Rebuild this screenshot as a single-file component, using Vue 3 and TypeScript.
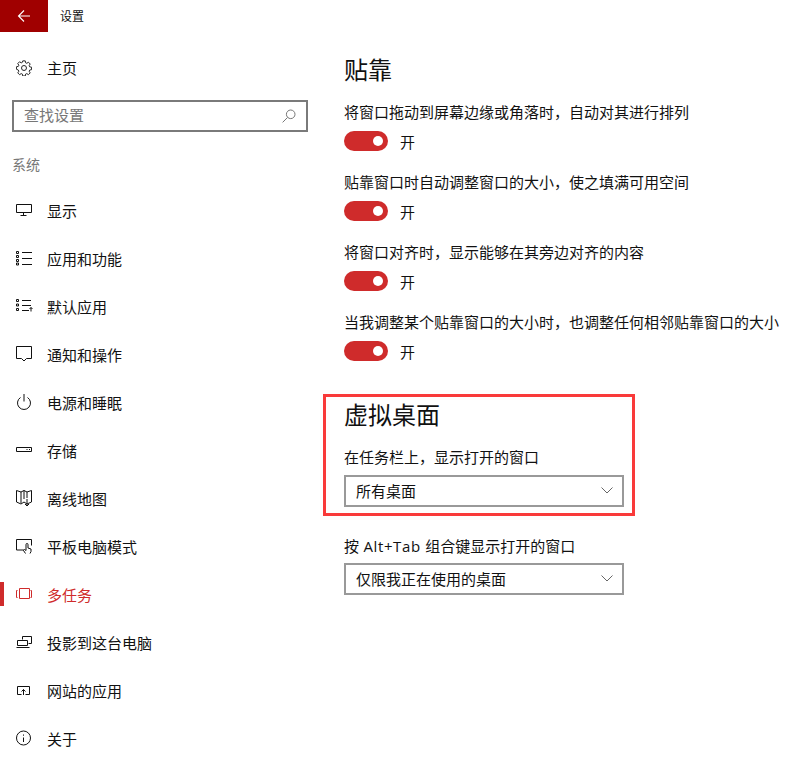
<template>
  <div class="page">
    <aside class="side">
      <div class="titlebar">
        <button class="back">
          <svg width="14" height="14" viewBox="0 0 14 14"><path d="M13 7H1.5M7 1.5 1.5 7 7 12.5" fill="none" stroke="#fff" stroke-width="1.1" /></svg>
        </button>
        <span class="app-title">设置</span>
      </div>

      <div class="home">
        <span class="icon">
          <svg width="16" height="16" viewBox="0 0 18 18" fill="none" stroke="#222" stroke-width="1.100">
            <circle cx="9" cy="9" r="2.800" />
            <path d="M7.600 1h2.800l.4 2.100 1.300.6 1.900-1.200 2 2-1.200 1.900.6 1.300 2.100.4v2.800l-2.100.4-.6 1.300 1.200 1.900-2 2-1.900-1.200-1.300.6-.4 2.100H7.600l-.4-2.100-1.300-.6-1.900 1.200-2-2 1.200-1.900-.6-1.300L.5 10.400V7.600l2.100-.4.6-1.300L2 4l2-2 1.900 1.200 1.300-.6z" />
          </svg>
        </span>
        <span class="home-label">主页</span>
      </div>

      <div class="search">
        <span class="search-label">查找设置</span>
        <svg width="14" height="14" viewBox="0 0 14 14" fill="none" stroke="#777" stroke-width="1"><circle cx="8.700" cy="5.300" r="4.300" /><path d="M5.600 8.400.6 13.400" /></svg>
      </div>

      <div class="group">系统</div>

      <nav>
        <div v-for="item in navItems" :key="item.label" class="nav-item" :class="{ active: item.active }">
          <span class="icon">
            <svg width="18" height="18" viewBox="0 0 18 18" fill="none" stroke="currentColor" stroke-width="1">
              <path :d="item.icon" />
            </svg>
          </span>
          <span class="nav-label">{{ item.label }}</span>
        </div>
      </nav>
    </aside>

    <main class="content">
      <h2 class="snap-title">贴靠</h2>
      <div v-for="opt in snapOptions" :key="opt" class="option">
        <div class="opt-label">{{ opt }}</div>
        <div class="toggle-row">
          <span class="toggle"><span class="knob"></span></span>
          <span>开</span>
        </div>
      </div>

      <section class="desktops">
        <div class="highlight"></div>
        <h2>虚拟桌面</h2>
        <div class="field-label">在任务栏上，显示打开的窗口</div>
        <div class="select first">
          <span>所有桌面</span>
          <svg width="12" height="7" viewBox="0 0 12 7" fill="none" stroke="#666" stroke-width="1"><path d="M.5.5 6 6 11.500.5" /></svg>
        </div>
        <div class="field-label second">按<span class="latin"> Alt+Tab </span>组合键显示打开的窗口</div>
        <div class="select">
          <span>仅限我正在使用的桌面</span>
          <svg width="12" height="7" viewBox="0 0 12 7" fill="none" stroke="#666" stroke-width="1"><path d="M.5.5 6 6 11.500.5" /></svg>
        </div>
      </section>
    </main>
  </div>
</template>

<script setup lang="ts">
interface NavItem {
  label: string;
  icon: string;
  active?: boolean;
}

const navItems: NavItem[] = [
  { label: "显示", icon: "M.5 3.500h15v8H.5zM7.500 11.500v2.500M4.500 14.500h6" },
  { label: "应用和功能", icon: "M.5 2.500h2v2h-2zM.5 6.500h2v2h-2zM.5 10.500h2v2h-2zM.5 14h2v2h-2zM6 3.500h10M6 9.500h10M6 15.500h10" },
  { label: "默认应用", icon: "M.5 2.500h2v2h-2zM.5 7h2v2h-2zM.5 11.500h2v2h-2zM6 3.500h9M6 8.500h9M6 13.500h7M15 14.500v-4M13.500 12 15 10.500l1.500 1.500" },
  { label: "通知和操作", icon: "M.5 1.500h15v12h-5L8 16l-2.500-2.500h-5z" },
  { label: "电源和睡眠", icon: "M8 1v7.500M4.500 4.500a6.500 6.500 0 1 0 7 0" },
  { label: "存储", icon: "M.5 6.500h15v4H.5zM10.500 8.500h1M13 8.500h1" },
  { label: "离线地图", icon: "M5 3 .5 1.500v11.500L5 15l3-2 3 2 4.500-2V1.500L11 3 8 1.500zM5 3v11M11 3v6M8 1.500V10M11 10v7M9 15l2 2 2-2" },
  { label: "平板电脑模式", icon: "M8 13H.5V2.500h15v6M9.500 16.500 7.500 13.500l1-1 1.500 1V7.500a1 1 0 0 1 2 0V11l3 1v2.500l-1 2" },
  { label: "多任务", icon: "M3.500 3.500h10v10h-10zM1.500 5.500h-1v7h1M14.500 5.500h1v7h-1", active: true },
  { label: "投影到这台电脑", icon: "M6.500 6.500v-3h9v7h-3M1.500 7.500h10v5h-10zM.5 14.500h13" },
  { label: "网站的应用", icon: "M5.500 13.500h-4v-8h12v8h-4M7.500 14V8.500M5.500 10.500l2-2 2 2" },
  { label: "关于", icon: "M7.500 2a7 7 0 1 0 0 14 7 7 0 0 0 0-14zM7.500 8.500v4.500M7.500 5.500v1.200" },
];

const snapOptions: string[] = [
  "将窗口拖动到屏幕边缘或角落时，自动对其进行排列",
  "贴靠窗口时自动调整窗口的大小，使之填满可用空间",
  "将窗口对齐时，显示能够在其旁边对齐的内容",
  "当我调整某个贴靠窗口的大小时，也调整任何相邻贴靠窗口的大小",
];
</script>

<style>
html,
body {
  margin: 0;
  background: #fff;
}
</style>

<style scoped>
.page {
  display: flex;
  width: 792px;
  height: 762px;
  overflow: hidden;
  font-family: "Noto Sans CJK SC", "Noto Sans", sans-serif;
  font-size: 15px;
  color: #111;
  background: #fff;
}

.side {
  width: 344px;
  flex-shrink: 0;
}

.titlebar {
  display: flex;
  align-items: center;
  height: 32px;
}

.back {
  display: flex;
  align-items: center;
  justify-content: center;
  width: 48px;
  height: 32px;
  padding: 0;
  border: 0;
  background: #a00000;
}

.app-title {
  margin-left: 12px;
  padding-bottom: 2px;
  font-size: 12px;
}

.icon {
  display: flex;
  align-items: center;
  width: 31px;
}

.home-label {
  padding-bottom: 1px;
}

.search-label {
  padding-bottom: 3px;
}

.nav-label {
  padding-top: 1px;
}

.home {
  display: flex;
  align-items: center;
  height: 48px;
  margin-top: 12px;
  padding-left: 16px;
}

.search {
  display: flex;
  align-items: center;
  justify-content: space-between;
  box-sizing: border-box;
  width: 296px;
  height: 32px;
  margin: 8px 0 0 12px;
  padding: 0 10px;
  border: 2px solid #7a7a7a;
  color: #777;
}

.group {
  height: 20px;
  margin-top: 22px;
  padding-left: 12px;
  line-height: 20px;
  font-size: 14px;
  color: #777;
}

nav {
  margin-top: 12px;
}

.nav-item {
  display: flex;
  align-items: center;
  height: 48px;
  padding-left: 16px;
  position: relative;
}

.nav-item.active {
  color: #cf2b2b;
}

.nav-item.active::before {
  content: "";
  position: absolute;
  left: 0;
  top: 12px;
  width: 4px;
  height: 24px;
  background: #cf2b2b;
}

.content {
  flex: 1;
  min-width: 0;
}

h2 {
  margin: 0;
  font-size: 24px;
  font-weight: 400;
  line-height: 34px;
}

.snap-title {
  margin-top: 52px;
  margin-bottom: 10px;
}

.option {
  height: 70px;
}

.opt-label {
  height: 32px;
  line-height: 32px;
  white-space: nowrap;
}

.toggle-row {
  display: flex;
  align-items: center;
  gap: 12px;
  height: 26px;
}

.toggle {
  display: flex;
  align-items: center;
  justify-content: flex-end;
  box-sizing: border-box;
  width: 44px;
  height: 20px;
  padding-right: 5px;
  border-radius: 10px;
  background: #cf2b2b;
}

.knob {
  width: 10px;
  height: 10px;
  border-radius: 50%;
  background: #fff;
}

.desktops {
  position: relative;
  margin-top: 21px;
}

.highlight {
  position: absolute;
  left: -21px;
  top: -3px;
  box-sizing: border-box;
  width: 312px;
  height: 122px;
  border: 3px solid #f93a3a;
}

.field-label {
  height: 22px;
  margin-top: 15px;
  line-height: 22px;
  white-space: nowrap;
}

.field-label.second {
  margin-top: 28px;
}

.latin {
  font-family: "Open Sans", sans-serif;
  letter-spacing: 0.6px;
}

.select {
  display: flex;
  align-items: center;
  justify-content: space-between;
  box-sizing: border-box;
  width: 280px;
  height: 32px;
  margin-top: 6px;
  padding: 0 9px 2px 10px;
  border: 2px solid #999;
}

.select.first {
  margin-top: 7px;
}
</style>
